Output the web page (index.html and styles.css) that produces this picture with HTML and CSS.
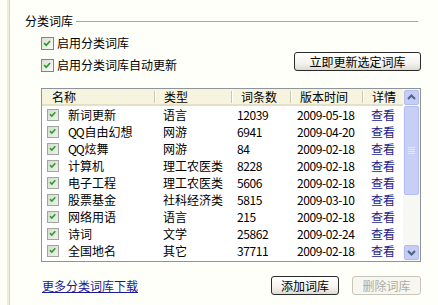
FILE: index.html
```html
<!DOCTYPE html>
<html lang="zh-CN">
<head>
<meta charset="utf-8">
<title>分类词库</title>
<link rel="stylesheet" href="styles.css">
</head>
<body>
<div class="page">
  <div class="rail"></div>
  <div class="content">
    <div class="legend"><span>分类词库</span><span class="rule"></span></div>
    <div class="section">
      <label class="check row1"><span class="box"><svg viewBox="0 0 13 13" width="11" height="11"><polyline points="2.5,6 5,8.5 9.5,3.5" fill="none" stroke="#21a121" stroke-width="2"/></svg></span>启用分类词库</label>
      <div class="row2">
        <label class="check"><span class="box"><svg viewBox="0 0 13 13" width="11" height="11"><polyline points="2.5,6 5,8.5 9.5,3.5" fill="none" stroke="#21a121" stroke-width="2"/></svg></span>启用分类词库自动更新</label>
        <button class="btn wide">立即更新选定词库</button>
      </div>
      <div class="list">
        <div class="table">
          <div class="head">
            <div class="hc first"><span class="htxt">名称</span></div>
            <div class="hc"><span class="sep"></span><span class="htxt">类型</span></div>
            <div class="hc"><span class="sep"></span><span class="htxt">词条数</span></div>
            <div class="hc"><span class="sep"></span><span class="htxt">版本时间</span></div>
            <div class="hc"><span class="sep"></span><span class="htxt">详情</span></div>
          </div>
          <div class="row"><div class="c1"><span class="rbox"><svg viewBox="0 0 13 13" width="11" height="11"><polyline points="2.5,6 5,8.5 9.5,3.5" fill="none" stroke="#2a9e2a" stroke-width="2"/></svg></span>新词更新</div><div class="c2">语言</div><div class="c3 num">12039</div><div class="c4 num">2009-05-18</div><div class="c5"><a>查看</a></div></div>
          <div class="row"><div class="c1"><span class="rbox"><svg viewBox="0 0 13 13" width="11" height="11"><polyline points="2.5,6 5,8.5 9.5,3.5" fill="none" stroke="#2a9e2a" stroke-width="2"/></svg></span><span class="lat">QQ</span>自由幻想</div><div class="c2">网游</div><div class="c3 num">6941</div><div class="c4 num">2009-04-20</div><div class="c5"><a>查看</a></div></div>
          <div class="row"><div class="c1"><span class="rbox"><svg viewBox="0 0 13 13" width="11" height="11"><polyline points="2.5,6 5,8.5 9.5,3.5" fill="none" stroke="#2a9e2a" stroke-width="2"/></svg></span><span class="lat">QQ</span>炫舞</div><div class="c2">网游</div><div class="c3 num">84</div><div class="c4 num">2009-02-18</div><div class="c5"><a>查看</a></div></div>
          <div class="row"><div class="c1"><span class="rbox"><svg viewBox="0 0 13 13" width="11" height="11"><polyline points="2.5,6 5,8.5 9.5,3.5" fill="none" stroke="#2a9e2a" stroke-width="2"/></svg></span>计算机</div><div class="c2">理工农医类</div><div class="c3 num">8228</div><div class="c4 num">2009-02-18</div><div class="c5"><a>查看</a></div></div>
          <div class="row"><div class="c1"><span class="rbox"><svg viewBox="0 0 13 13" width="11" height="11"><polyline points="2.5,6 5,8.5 9.5,3.5" fill="none" stroke="#2a9e2a" stroke-width="2"/></svg></span>电子工程</div><div class="c2">理工农医类</div><div class="c3 num">5606</div><div class="c4 num">2009-02-18</div><div class="c5"><a>查看</a></div></div>
          <div class="row"><div class="c1"><span class="rbox"><svg viewBox="0 0 13 13" width="11" height="11"><polyline points="2.5,6 5,8.5 9.5,3.5" fill="none" stroke="#2a9e2a" stroke-width="2"/></svg></span>股票基金</div><div class="c2">社科经济类</div><div class="c3 num">5815</div><div class="c4 num">2009-03-10</div><div class="c5"><a>查看</a></div></div>
          <div class="row"><div class="c1"><span class="rbox"><svg viewBox="0 0 13 13" width="11" height="11"><polyline points="2.5,6 5,8.5 9.5,3.5" fill="none" stroke="#2a9e2a" stroke-width="2"/></svg></span>网络用语</div><div class="c2">语言</div><div class="c3 num">215</div><div class="c4 num">2009-02-18</div><div class="c5"><a>查看</a></div></div>
          <div class="row"><div class="c1"><span class="rbox"><svg viewBox="0 0 13 13" width="11" height="11"><polyline points="2.5,6 5,8.5 9.5,3.5" fill="none" stroke="#2a9e2a" stroke-width="2"/></svg></span>诗词</div><div class="c2">文学</div><div class="c3 num">25862</div><div class="c4 num">2009-02-24</div><div class="c5"><a>查看</a></div></div>
          <div class="row"><div class="c1"><span class="rbox"><svg viewBox="0 0 13 13" width="11" height="11"><polyline points="2.5,6 5,8.5 9.5,3.5" fill="none" stroke="#2a9e2a" stroke-width="2"/></svg></span>全国地名</div><div class="c2">其它</div><div class="c3 num">37711</div><div class="c4 num">2009-02-18</div><div class="c5"><a>查看</a></div></div>
        </div>
        <div class="scroll">
          <div class="sbtn"><svg viewBox="0 0 15 15" width="15" height="15"><polyline points="4,9 7.5,5.5 11,9" fill="none" stroke="#4d6185" stroke-width="2"/></svg></div>
          <div class="thumb"><span class="grip"></span><span class="grip"></span><span class="grip"></span><span class="grip"></span></div>
          <div class="track"></div>
          <div class="sbtn"><svg viewBox="0 0 15 15" width="15" height="15"><polyline points="4,6 7.5,9.5 11,6" fill="none" stroke="#4d6185" stroke-width="2"/></svg></div>
        </div>
      </div>
      <div class="footer">
        <a class="link">更多分类词库下载</a>
        <div class="btns">
          <button class="btn add">添加词库</button>
          <button class="btn del" disabled>删除词库</button>
        </div>
      </div>
    </div>
  </div>
</div>
</body>
</html>
```

FILE: styles.css
```css
* { box-sizing: border-box; }
html, body { margin: 0; padding: 0; }
body {
  width: 438px;
  height: 305px;
  overflow: hidden;
  background: #fffff9;
  font-family: "Noto Sans CJK SC", "Liberation Sans", sans-serif;
  font-size: 12px;
  color: #000;
}
.page { display: flex; height: 305px; }
.rail {
  margin-left: 7px;
  width: 3px;
  height: 305px;
  background: #f1eed8;
  border-right: 1px solid #dcd8b5;
}
.content {
  flex: 1;
  padding: 14px 17px 0 15px;
}
.legend {
  display: flex;
  align-items: center;
  line-height: 14px;
  height: 14px;
}
.rule {
  flex: 1;
  height: 1px;
  background: #a7a7a2;
  margin: 0 3px 0 3px;
}
.section { padding-left: 16px; }
.check {
  display: flex;
  align-items: center;
  line-height: 14px;
  height: 14px;
}
.row1 { margin-top: 8px; }
.box {
  width: 13px;
  height: 13px;
  margin-right: 3px;
  border: 1px solid #6f87a4;
  background: linear-gradient(135deg, #dcdcd6, #fbfbf8);
  display: flex;
  align-items: center;
  justify-content: center;
}
.row2 {
  margin-top: 2px;
  height: 20px;
  display: flex;
  justify-content: space-between;
  align-items: flex-end;
}
.btn {
  font-family: "Noto Sans CJK SC", "Liberation Sans", sans-serif;
  font-size: 12px;
  line-height: 15px;
  height: 19px;
  padding: 0;
  color: #000;
  border: 1px solid #2b2b2b;
  border-radius: 3px;
  background: linear-gradient(#ffffff, #f4f3ee 60%, #dcdad0);
}
.wide { width: 127px; margin-bottom: 1px; }
.list {
  margin-top: 16px;
  width: 380px;
  height: 174px;
  border: 1px solid #8c959c;
  background: #fff;
  display: flex;
}
.table { width: 361px; padding-bottom: 2px; }
.head, .row {
  display: grid;
  grid-template-columns: 112px 77px 59px 72px 41px;
}
.head {
  height: 17px;
  background: #f6f3de;
  border-bottom: 2px solid #e4e0c6;
}
.hc {
  display: flex;
  align-items: center;
  line-height: 15px;
}
.hc.first { padding-left: 10px; }
.sep {
  width: 2px;
  height: 12px;
  background: #cbc7b3;
  border-right: 1px solid #fff;
}
.htxt { margin-left: 8px; }
.first .htxt { margin-left: 0; }
.row { height: 17px; line-height: 17px; }
.c1 { display: flex; align-items: center; padding-left: 5px; white-space: nowrap; }
.c2 { padding-left: 9px; white-space: nowrap; }
.c3 { padding-left: 6px; }
.c4 { padding-left: 7px; }
.c5 { padding-left: 9px; }
.c5 a { color: #1c1c8c; }
.num { letter-spacing: -0.4px; }
.lat { letter-spacing: -1.2px; margin-right: 1px; }
.rbox {
  width: 12px;
  height: 12px;
  margin-right: 9px;
  border: 1px solid #9ea69e;
  background: linear-gradient(135deg, #d9dcd3, #eef0ea);
  display: flex;
  align-items: center;
  justify-content: center;
}
.scroll {
  width: 17px;
  display: flex;
  flex-direction: column;
  background: #f7f7f3;
}
.sbtn {
  width: 15px;
  height: 15px;
  margin: 1px;
  background: #c5cdf6;
  border: 1px solid #b2bdee;
  border-radius: 2px;
  display: flex;
  align-items: center;
  justify-content: center;
}
.sbtn svg { display: block; margin: -1px; }
.thumb {
  height: 89px;
  margin: 0 1px;
  background: #c8cff7;
  border: 1px solid #b4bdee;
  border-radius: 2px;
  display: flex;
  flex-direction: column;
  align-items: center;
  justify-content: center;
  gap: 1px;
}
.grip { width: 7px; height: 1px; background: #e6e9fb; }
.track { flex: 1; }
.footer {
  margin-top: 14px;
  display: flex;
  align-items: center;
  height: 19px;
}
.link {
  color: #1a1a96;
  text-decoration: underline;
  line-height: 14px;
  margin-left: 1px;
}
.btns { margin-left: auto; display: flex; gap: 13px; }
.add { width: 68px; }
.del {
  width: 69px;
  color: #aeaca0;
  border-color: #c8c6bb;
  background: #f7f6f0;
}
```
